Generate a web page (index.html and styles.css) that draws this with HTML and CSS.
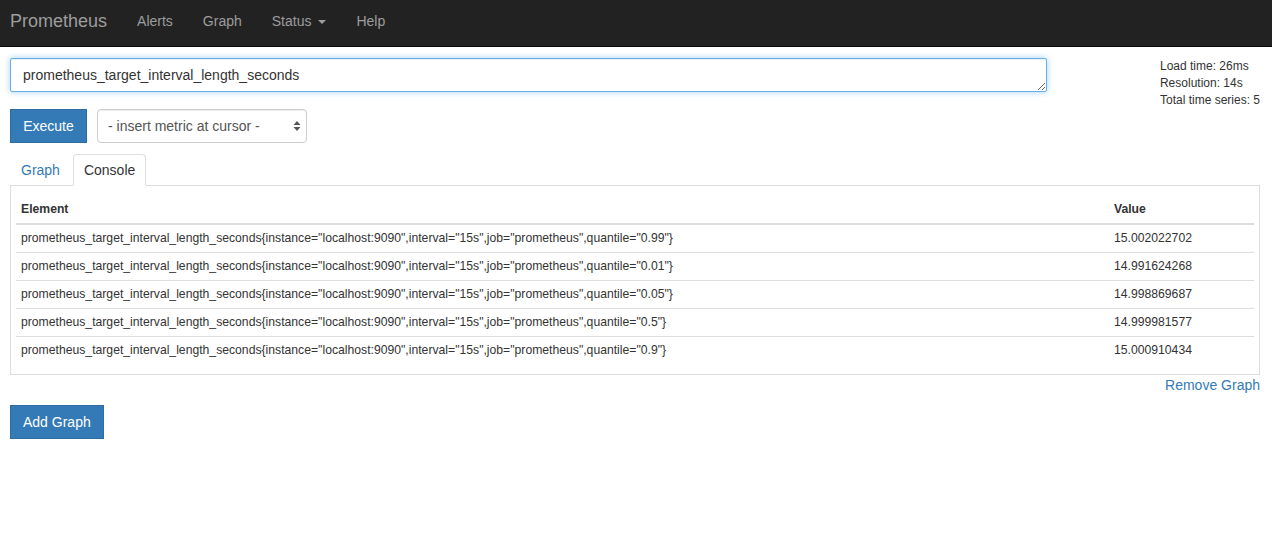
FILE: index.html
```html
<!DOCTYPE html>
<html lang="en">
<head>
    <meta charset="UTF-8">
    <meta name="viewport" content="width=device-width, initial-scale=1.0">
    <title>Prometheus Time Series Collection and Processing Server</title>
    <link rel="stylesheet" href="styles.css">
</head>
<body>
    <nav class="navbar">
        <a class="navbar-brand" href="#">Prometheus</a>
        <ul class="nav">
            <li><a href="#">Alerts</a></li>
            <li><a href="#">Graph</a></li>
            <li><a href="#">Status <span class="caret"></span></a></li>
            <li><a href="#">Help</a></li>
        </ul>
    </nav>

    <div class="container">
        <div class="graph">
            <div class="query-row">
                <textarea class="expression-input" rows="1">prometheus_target_interval_length_seconds</textarea>
                <div class="eval-stats">
                    Load time: 26ms<br>
                    Resolution: 14s<br>
                    Total time series: 5
                </div>
            </div>

            <div class="action-row">
                <button class="btn btn-primary">Execute</button>
                <div class="select-wrap">
                    <select class="insert-metric">
                        <option>- insert metric at cursor -</option>
                    </select>
                    <svg class="select-arrows" width="8" height="12" viewBox="0 0 8 12">
                        <path d="M4 1 L7.5 5 L0.5 5 Z" fill="#555"/>
                        <path d="M4 11 L7.5 7 L0.5 7 Z" fill="#555"/>
                    </svg>
                </div>
            </div>

            <ul class="nav-tabs">
                <li><a href="#">Graph</a></li>
                <li class="active"><a href="#">Console</a></li>
            </ul>

            <div class="tab-content">
                <table class="console-table">
                    <thead>
                        <tr><th>Element</th><th class="value-col">Value</th></tr>
                    </thead>
                    <tbody id="consoleRows"></tbody>
                </table>
            </div>

            <div class="remove-row"><a href="#">Remove Graph</a></div>
        </div>

        <button class="btn btn-primary">Add Graph</button>
    </div>

    <script>
        const series = [
            ['0.99', '15.002022702'],
            ['0.01', '14.991624268'],
            ['0.05', '14.998869687'],
            ['0.5', '14.999981577'],
            ['0.9', '15.000910434']
        ];

        const tbody = document.getElementById('consoleRows');
        series.forEach(([q, v]) => {
            const tr = document.createElement('tr');
            tr.innerHTML = `
                <td>prometheus_target_interval_length_seconds{instance="localhost:9090",interval="15s",job="prometheus",quantile="${q}"}</td>
                <td>${v}</td>
            `;
            tbody.appendChild(tr);
        });
    </script>
</body>
</html>
```

FILE: styles.css
```css
* { margin: 0; padding: 0; box-sizing: border-box; }
body { font-family: 'Liberation Sans', Arial, sans-serif; font-size: 14px; line-height: 1.42857; color: #333; background: #fff; }
a { color: #337ab7; text-decoration: none; }

.navbar { height: 47px; background: #222; border-bottom: 1px solid #080808; display: flex; align-items: flex-start; }
.navbar-brand { color: #9d9d9d; font-size: 18px; padding: 0 30px 0 10px; line-height: 43px; }
.nav { list-style: none; display: flex; }
.nav li a { display: block; color: #9d9d9d; font-size: 14px; line-height: 43px; padding: 0 15px; }
.nav li:first-child a { padding-left: 0; }
.caret { display: inline-block; width: 0; height: 0; margin-left: 3px; vertical-align: middle; border-top: 4px solid; border-left: 4px solid transparent; border-right: 4px solid transparent; }

.container { padding: 0 12px 0 10px; }
.query-row { display: flex; justify-content: space-between; align-items: flex-start; padding-top: 11px; }
.expression-input { width: 1037px; height: 34px; padding: 6px 12px; font-family: inherit; font-size: 14px; line-height: 20px; color: #333; border: 1px solid #66afe9; border-radius: 2px; box-shadow: inset 0 1px 1px rgba(0,0,0,0.075), 0 0 6px rgba(102,175,233,0.6); resize: vertical; outline: none; overflow: hidden; }
.eval-stats { white-space: nowrap; font-size: 12px; line-height: 17px; }

.action-row { display: flex; gap: 10px; margin-top: 0; }
.btn { font-family: inherit; font-size: 14px; line-height: 20px; padding: 6px 12px; border: 1px solid transparent; border-radius: 0; cursor: pointer; white-space: nowrap; }
.btn-primary { background: #337ab7; border-color: #2e6da4; color: #fff; }
.action-row .btn { width: 77px; height: 34px; }
.select-wrap { position: relative; }
.insert-metric { appearance: none; -webkit-appearance: none; width: 210px; height: 34px; padding: 6px 10px; font-family: inherit; font-size: 14px; color: #555; background: #fff; border: 1px solid #ccc; border-radius: 4px; box-shadow: inset 0 1px 1px rgba(0,0,0,0.075); }
.select-arrows { position: absolute; right: 6px; top: 11px; pointer-events: none; }

.nav-tabs { list-style: none; display: flex; margin-top: 11px; border-bottom: 1px solid #ddd; }
.nav-tabs li { margin-bottom: -1px; }
.nav-tabs li a { display: block; padding: 5px 10px; line-height: 20px; font-size: 14px; border: 1px solid transparent; border-radius: 4px 4px 0 0; margin-right: 2px; }
.nav-tabs li.active a { color: #333; background: #fff; border-color: #ddd #ddd transparent; }

.tab-content { border: 1px solid #ddd; border-top: none; padding: 10px 5px 10px 5px; }
.console-table { width: 100%; border-collapse: collapse; font-size: 12.2px; }
.console-table th { text-align: left; font-weight: bold; padding: 5px; line-height: 17px; border-bottom: 2px solid #ddd; }
.console-table td { padding: 5px; line-height: 17px; border-top: 1px solid #ddd; }
.console-table tbody tr:first-child td { border-top: none; }
.value-col { width: 145px; }

.remove-row { text-align: right; padding: 0 0 10px; line-height: 20px; }
.remove-row a { font-size: 14px; }
.graph + .btn { height: 34px; }
```
